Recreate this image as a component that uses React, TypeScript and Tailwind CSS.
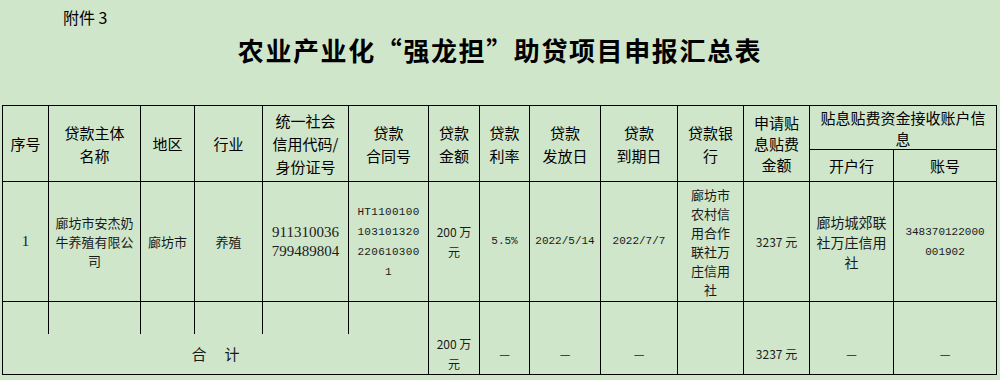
import React from "react";

const cjk = "font-['Noto_Sans_CJK_SC',sans-serif]";
const cell = "border border-black text-center align-middle p-0";
const mono = "font-['Liberation_Mono',monospace]";

const colClass = [
  "w-[46px]",
  "w-[92px]",
  "w-[54px]",
  "w-[68px]",
  "w-[86px]",
  "w-[80px]",
  "w-[51px]",
  "w-[50px]",
  "w-[71px]",
  "w-[77px]",
  "w-[66px]",
  "w-[66px]",
  "w-[84px]",
  "w-[103px]",
];

function Lines({ lines }: { lines: string[] }) {
  return (
    <>
      {lines.map((l, i) => (
        <div key={i}>{l}</div>
      ))}
    </>
  );
}

export default function App() {
  return (
    <div className={`w-[1000px] h-[380px] overflow-hidden bg-[#cfe6cb] text-black ${cjk}`}>
      <div className="h-[34px] pl-[63px] pt-[6px] text-[16px] leading-[22px]">附件 3</div>
      <div className="h-[32px] text-center text-[26px] leading-[32px] font-bold tracking-[1.6px]">
        农业产业化“强龙担”助贷项目申报汇总表
      </div>

      <table className="mt-[39px] ml-[2px] w-[994px] table-fixed border-collapse">
        <colgroup>
          {colClass.map((c, i) => (
            <col key={i} className={c} />
          ))}
        </colgroup>
        <thead>
          <tr className="h-[44px] text-[15px] leading-[23px]">
            <th rowSpan={2} className={`${cell} font-normal`}>序号</th>
            <th rowSpan={2} className={`${cell} font-normal`}>
              <Lines lines={["贷款主体", "名称"]} />
            </th>
            <th rowSpan={2} className={`${cell} font-normal`}>地区</th>
            <th rowSpan={2} className={`${cell} font-normal`}>行业</th>
            <th rowSpan={2} className={`${cell} font-normal`}>
              <Lines lines={["统一社会", "信用代码/", "身份证号"]} />
            </th>
            <th rowSpan={2} className={`${cell} font-normal`}>
              <Lines lines={["贷款", "合同号"]} />
            </th>
            <th rowSpan={2} className={`${cell} font-normal`}>
              <Lines lines={["贷款", "金额"]} />
            </th>
            <th rowSpan={2} className={`${cell} font-normal`}>
              <Lines lines={["贷款", "利率"]} />
            </th>
            <th rowSpan={2} className={`${cell} font-normal`}>
              <Lines lines={["贷款", "发放日"]} />
            </th>
            <th rowSpan={2} className={`${cell} font-normal`}>
              <Lines lines={["贷款", "到期日"]} />
            </th>
            <th rowSpan={2} className={`${cell} font-normal`}>
              <Lines lines={["贷款银", "行"]} />
            </th>
            <th rowSpan={2} className={`${cell} font-normal leading-[21px]`}>
              <Lines lines={["申请贴", "息贴费", "金额"]} />
            </th>
            <th colSpan={2} className={`${cell} font-normal leading-[21px]`}>
              <Lines lines={["贴息贴费资金接收账户信", "息"]} />
            </th>
          </tr>
          <tr className="h-[32px] text-[15px] leading-[23px]">
            <th className={`${cell} font-normal`}>开户行</th>
            <th className={`${cell} font-normal`}>账号</th>
          </tr>
        </thead>
        <tbody className="text-[#1a1a1a]">
          <tr className="h-[120px]">
            <td className={`${cell} font-['Liberation_Serif',serif] text-[15px]`}>1</td>
            <td className={`${cell} text-[13px] leading-[19px]`}>
              <Lines lines={["廊坊市安杰奶", "牛养殖有限公", "司"]} />
            </td>
            <td className={`${cell} text-[13px]`}>廊坊市</td>
            <td className={`${cell} text-[13px]`}>养殖</td>
            <td className={`${cell} font-['Liberation_Serif',serif] text-[15px] leading-[19px]`}>
              <Lines lines={["911310036", "799489804"]} />
            </td>
            <td className={`${cell} ${mono} text-[11px] leading-[20px] tracking-[0.3px]`}>
              <Lines lines={["HT1100100", "103101320", "220610300", "1"]} />
            </td>
            <td className={`${cell} text-[12px] leading-[20px]`}>
              <Lines lines={["200 万", "元"]} />
            </td>
            <td className={`${cell} ${mono} text-[11px]`}>5.5%</td>
            <td className={`${cell} ${mono} text-[11px]`}>2022/5/14</td>
            <td className={`${cell} ${mono} text-[11px]`}>2022/7/7</td>
            <td className={`${cell} text-[13px] leading-[19px]`}>
              <Lines lines={["廊坊市", "农村信", "用合作", "联社万", "庄信用", "社"]} />
            </td>
            <td className={`${cell} text-[12px]`}>3237 元</td>
            <td className={`${cell} text-[14px] leading-[20px]`}>
              <Lines lines={["廊坊城郊联", "社万庄信用", "社"]} />
            </td>
            <td className={`${cell} ${mono} text-[11px] leading-[20px]`}>
              <Lines lines={["348370122000", "001902"]} />
            </td>
          </tr>
          <tr className="h-[32px]">
            {colClass.map((_, i) => (
              <td key={i} className={`${cell} border-b-0`} />
            ))}
          </tr>
          <tr className="h-[41px]">
            <td colSpan={6} className={`${cell} border-t-0 text-[15px]`}>
              合<span className="inline-block w-[18px]" />计
            </td>
            <td className={`${cell} border-t-0 text-[12px] leading-[20px]`}>
              <Lines lines={["200 万", "元"]} />
            </td>
            <td className={`${cell} border-t-0 text-[12px]`}>—</td>
            <td className={`${cell} border-t-0 text-[12px]`}>—</td>
            <td className={`${cell} border-t-0 text-[12px]`}>—</td>
            <td className={`${cell} border-t-0`} />
            <td className={`${cell} border-t-0 text-[12px]`}>3237 元</td>
            <td className={`${cell} border-t-0 text-[12px]`}>—</td>
            <td className={`${cell} border-t-0 text-[12px]`}>—</td>
          </tr>
        </tbody>
      </table>
    </div>
  );
}
